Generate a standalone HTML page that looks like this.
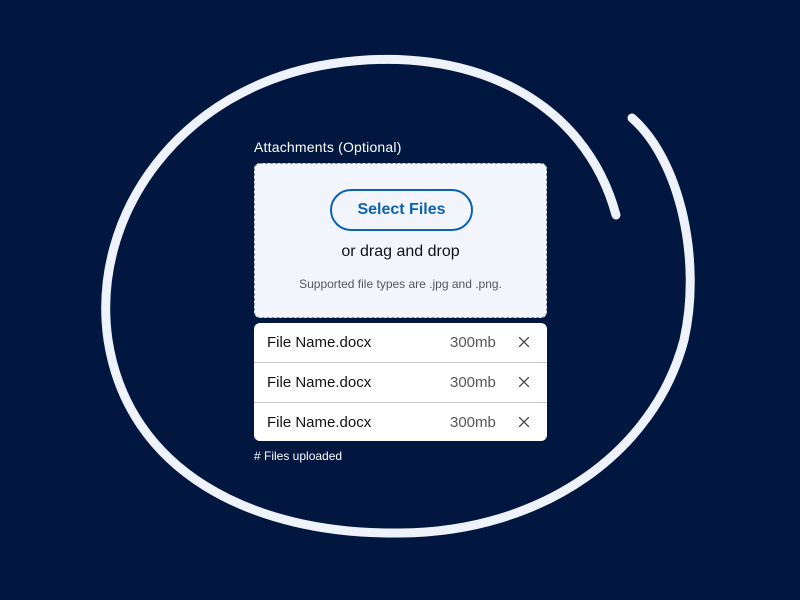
<!DOCTYPE html>
<html><head><style>
body{margin:0;width:800px;height:600px;background:#021740;font-family:"Liberation Sans",sans-serif;position:relative;overflow:hidden}
svg.bg{position:absolute;left:0;top:0}
.lbl{position:absolute;left:254px;top:139px;color:#fff;font-size:14px;letter-spacing:0.2px}
.drop{position:absolute;left:254px;top:163px;width:291px;height:153px;background:#f2f5fc;border:1px dashed #8a93a6;border-radius:6px}
.btn{position:absolute;left:75px;top:25px;width:139px;height:38px;border:2px solid #0b62b0;border-radius:22px;color:#0b62b0;font-weight:bold;font-size:16px;text-align:center;line-height:38px;box-sizing:content-box}
.or{position:absolute;left:0;width:100%;top:79px;text-align:center;font-size:16px;color:#111}
.sup{position:absolute;left:0;width:100%;top:113px;text-align:center;font-size:12px;color:#555}
.list{position:absolute;left:254px;top:323px;width:293px;height:118px;background:#fff;border-radius:6px;overflow:hidden}
.row{height:39px;border-bottom:1.5px solid #c8c8c8;position:relative;font-size:15px;color:#111}
.row:last-child{border-bottom:none}
.row .n{position:absolute;left:13px;top:11px}
.row .s{position:absolute;left:196px;top:11px;color:#555}
.row svg{position:absolute;left:265px;top:14px}
.cnt{position:absolute;left:254px;top:449px;color:#fff;font-size:12px}
</style></head><body>
<svg class="bg" width="800" height="600"><path d="M632,118 C680,160 702,260 684,340 C655,450 545,532 400,533 C250,535 128,470 108,340 C90,215 180,88 330,64 C470,42 585,100 616,215" fill="none" stroke="#eef2fa" stroke-width="9" stroke-linecap="round"/></svg>
<div class="lbl">Attachments (Optional)</div>
<div class="drop"><div class="btn">Select Files</div><div class="or">or drag and drop</div><div class="sup">Supported file types are .jpg and .png.</div></div>
<div class="list">
<div class="row"><span class="n">File Name.docx</span><span class="s">300mb</span><svg width="10" height="10"><path d="M0,0L10,10M10,0L0,10" stroke="#444" stroke-width="1.3"/></svg></div>
<div class="row"><span class="n">File Name.docx</span><span class="s">300mb</span><svg width="10" height="10"><path d="M0,0L10,10M10,0L0,10" stroke="#444" stroke-width="1.3"/></svg></div>
<div class="row"><span class="n">File Name.docx</span><span class="s">300mb</span><svg width="10" height="10"><path d="M0,0L10,10M10,0L0,10" stroke="#444" stroke-width="1.3"/></svg></div>
</div>
<div class="cnt"># Files uploaded</div>
</body></html>
